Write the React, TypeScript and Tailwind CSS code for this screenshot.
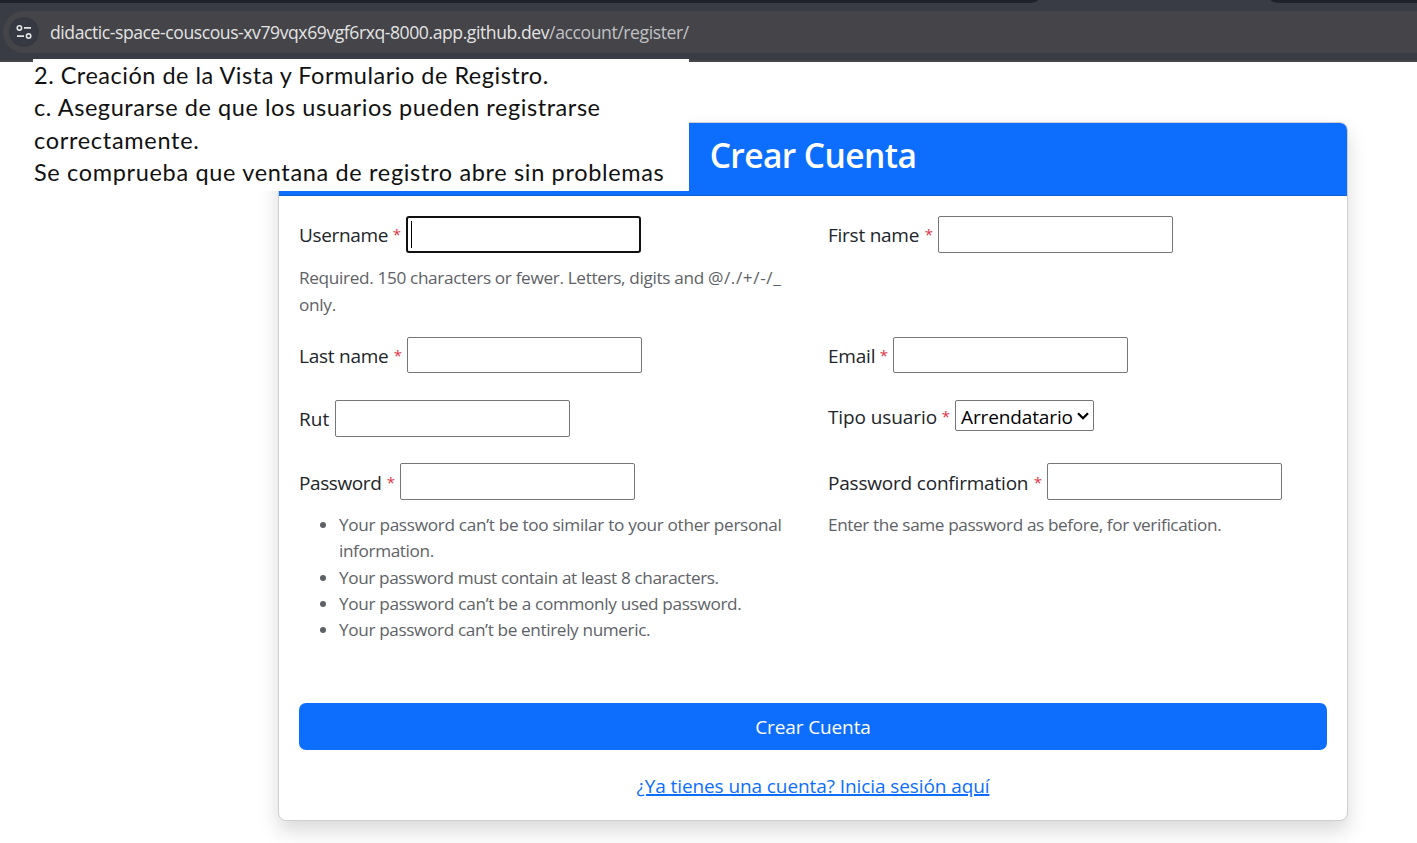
import type { ReactNode } from "react";

type FieldProps = {
  label: string;
  labelClass: string;
  textClass: string;
  required?: boolean;
  children: ReactNode;
};

function Field({ label, labelClass, textClass, required = true, children }: FieldProps) {
  return (
    <div className="flex items-start">
      <label className={`flex shrink-0 whitespace-nowrap text-[19px] leading-[30px] ${labelClass}`}>
        <span className={textClass}>{label}</span>
        {required && <span className="ml-auto pr-[5px] text-[15px] leading-[28px] text-[#dc3545]">*</span>}
      </label>
      {children}
    </div>
  );
}

function TextBox({ className = "h-[37px]" }: { className?: string }) {
  return <div className={`w-[235px] shrink-0 rounded-[2px] border border-[#767676] bg-white ${className}`} />;
}

function SiteControls() {
  return (
    <div className="flex size-[30px] items-center justify-center rounded-full bg-[#363942]">
      <svg width="16" height="16" viewBox="0 0 16 16" fill="none" stroke="#e3e3e3" strokeWidth="1.6">
        <circle cx="3.4" cy="3.9" r="2.2" />
        <path d="M8 3.9h7M1 12.1h7" />
        <circle cx="12.6" cy="12.1" r="2.2" />
      </svg>
    </div>
  );
}

function BrowserBar() {
  return (
    <header className="h-[62px] border-b-2 border-[#474648] bg-[#393c45]">
      <div className="flex h-[3px] justify-between bg-[#393c45]">
        <div className="w-[1038px] rounded-br-[10px_3px] bg-[#1e2129]" />
        <div className="w-[146px] rounded-bl-[10px_3px] bg-[#1e2129]" />
      </div>
      <div className="ml-[3px] mt-[8px] flex h-[42px] items-center rounded-l-full bg-[#444449] pl-[6px]">
        <SiteControls />
        <div className="ml-[11px] whitespace-nowrap font-['Open_Sans'] text-[17.6px] leading-[24px] text-[#e3e3e3]">
          <span className="tracking-[-0.44px]">didactic-space-couscous-xv79vqx69vgf6rxq-8000.app.github.dev</span>
          <span className="tracking-[-0.42px] text-[#c0c1c4]">/account/register/</span>
        </div>
      </div>
    </header>
  );
}

function Note() {
  return (
    <aside className="absolute left-[33px] top-[59px] h-[132px] w-[656px] whitespace-nowrap bg-white pl-[1px] font-['Lato'] text-[23.5px] text-[#111]">
      <p className="h-[32px] leading-[33px] tracking-[0.51px]">2. Creación de la Vista y Formulario de Registro.</p>
      <p className="h-[33px] leading-[33px] tracking-[0.56px]">c. Asegurarse de que los usuarios pueden registrarse</p>
      <p className="h-[32px] leading-[33px] tracking-[0.7px]">correctamente.</p>
      <p className="h-[33px] leading-[33px] tracking-[0.66px]">Se comprueba que ventana de registro abre sin problemas</p>
    </aside>
  );
}

export default function App() {
  return (
    <div className="relative h-[843px] w-[1417px] overflow-hidden bg-white font-['Open_Sans',sans-serif] text-[#212529]">
      <BrowserBar />
      <main className="ml-[278px] mt-[60px] h-[699px] w-[1070px] rounded-[8px] border border-[#cfcfcf] bg-white shadow-[0_10px_20px_rgba(0,0,0,0.15)]">
        <h1 className="h-[73px] rounded-t-[7px] border-b border-[#0c5fd6] bg-[#0d6efd] pt-[11px] text-center text-[33.6px] font-semibold leading-[42px] text-white">
          <span className="tracking-[-0.6px]">Crear Cuenta</span>
        </h1>
        <form className="px-[20px] pt-[20px]">
          <div className="grid h-[487px] grid-cols-[529px_499px] grid-rows-[121px_63px_63px_240px]">
            <div>
              <Field label="Username" labelClass="w-[107px] pt-[4px]" textClass="tracking-[-0.35px]">
                <div className="h-[37px] w-[235px] rounded-[3px] border-2 border-[#101010] py-[3px] pl-[3px]">
                  <div className="h-[27px] w-px bg-black" />
                </div>
              </Field>
              <p className="mt-[12px] whitespace-nowrap text-[17.2px] leading-[26.5px] text-[#5e6266]">
                <span className="tracking-[-0.34px]">Required. 150 characters or fewer. Letters, digits and </span>
                <span className="tracking-[0.6px]">@/./+/-/_</span>
                <br />
                <span className="tracking-[-0.3px]">only.</span>
              </p>
            </div>
            <Field label="First name" labelClass="w-[110px] pt-[4px]" textClass="tracking-[-0.25px]">
              <TextBox />
            </Field>
            <Field label="Last name" labelClass="w-[108px] pt-[4px]" textClass="tracking-[-0.25px]">
              <TextBox className="h-[36px]" />
            </Field>
            <Field label="Email" labelClass="w-[65px] pt-[4px]" textClass="tracking-[-0.2px]">
              <TextBox className="h-[36px]" />
            </Field>
            <Field label="Rut" labelClass="w-[36px] pt-[4px]" textClass="" required={false}>
              <TextBox />
            </Field>
            <Field label="Tipo usuario" labelClass="w-[127px] pt-[2px]" textClass="tracking-[-0.1px]">
              <div className="flex h-[31px] w-[139px] items-center justify-between rounded-[2px] border border-[#767676] pl-[5px] pr-[4px] text-[19px] text-black">
                <span className="whitespace-nowrap pt-[3px] tracking-[-0.12px]">Arrendatario</span>
                <svg width="12" height="8" viewBox="0 0 12 8" fill="none" stroke="black" strokeWidth="2.3">
                  <path d="M1 1.2 6 6.2l5-5" />
                </svg>
              </div>
            </Field>
            <div>
              <Field label="Password" labelClass="w-[101px] pt-[5px]" textClass="tracking-[-0.4px]">
                <TextBox />
              </Field>
              <ul className="mt-[12px] list-disc whitespace-nowrap pl-[40px] text-[17.2px] leading-[26.3px] text-[#5e6266]">
                <li>
                  <span className="tracking-[-0.31px]">Your password can’t be too similar to your other personal</span>
                  <br />
                  <span className="tracking-[-0.38px]">information.</span>
                </li>
                <li><span className="tracking-[-0.39px]">Your password must contain at least 8 characters.</span></li>
                <li><span className="tracking-[-0.34px]">Your password can’t be a commonly used password.</span></li>
                <li><span className="tracking-[-0.37px]">Your password can’t be entirely numeric.</span></li>
              </ul>
            </div>
            <div>
              <Field label="Password confirmation" labelClass="w-[219px] pt-[5px]" textClass="tracking-[-0.2px]">
                <TextBox />
              </Field>
              <p className="mt-[12px] whitespace-nowrap text-[17.2px] leading-[26.3px] text-[#5e6266]">
                <span className="tracking-[-0.38px]">Enter the same password as before, for verification.</span>
              </p>
            </div>
          </div>
          <button type="button" className="block h-[47px] w-full rounded-[7px] bg-[#0d6efd] pt-px text-[19px] text-white">
            <span className="tracking-[-0.12px]">Crear Cuenta</span>
          </button>
          <p className="mt-[21px] text-center text-[19px] leading-[30px]">
            <a className="tracking-[-0.09px] text-[#0d6efd] underline decoration-2 underline-offset-1">¿Ya tienes una cuenta? Inicia sesión aquí</a>
          </p>
        </form>
      </main>
      <Note />
    </div>
  );
}
